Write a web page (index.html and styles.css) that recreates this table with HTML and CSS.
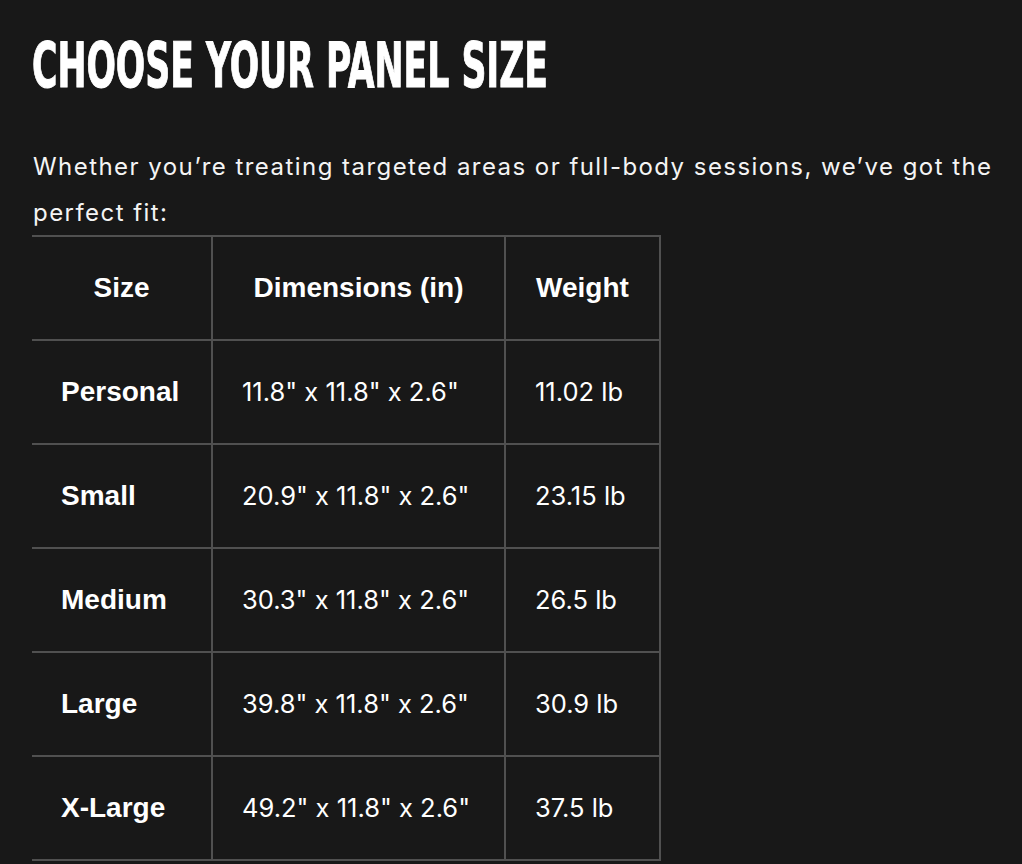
FILE: index.html
```html
<!DOCTYPE html>
<html lang="en">
<head>
<meta charset="utf-8">
<title>Choose your panel size</title>
<link rel="stylesheet" href="styles.css">
</head>
<body>
<main class="section">
  <h2 class="title">CHOOSE YOUR PANEL SIZE</h2>
  <p class="intro">Whether you’re treating targeted areas or full-body sessions, we’ve got the perfect fit:</p>
  <table class="sizes">
    <colgroup>
      <col class="c1"><col class="c2"><col class="c3">
    </colgroup>
    <thead>
      <tr><th>Size</th><th>Dimensions (in)</th><th>Weight</th></tr>
    </thead>
    <tbody>
      <tr><td class="name">Personal</td><td>11.8" x 11.8" x 2.6"</td><td>11.02 lb</td></tr>
      <tr><td class="name">Small</td><td>20.9" x 11.8" x 2.6"</td><td>23.15 lb</td></tr>
      <tr><td class="name">Medium</td><td>30.3" x 11.8" x 2.6"</td><td>26.5 lb</td></tr>
      <tr><td class="name">Large</td><td>39.8" x 11.8" x 2.6"</td><td>30.9 lb</td></tr>
      <tr><td class="name">X-Large</td><td>49.2" x 11.8" x 2.6"</td><td>37.5 lb</td></tr>
    </tbody>
  </table>
</main>
</body>
</html>
```

FILE: styles.css
```css
html, body {
  margin: 0;
  padding: 0;
  background: #181818;
  color: #ffffff;
}
body {
  font-family: Inter, "Noto Sans", sans-serif;
}
.section {
  padding: 35px 0 0 32px;
}
.title {
  margin: 0;
  font-family: "DejaVu Sans Condensed", "DejaVu Sans", sans-serif;
  font-weight: 700;
  font-size: 62px;
  line-height: 62px;
  white-space: nowrap;
  transform: scaleX(0.621);
  transform-origin: left center;
  -webkit-text-stroke: 1px #ffffff;
}
.intro {
  margin: 47px 0 0 1px;
  font-size: 24px;
  line-height: 46px;
  letter-spacing: 1.45px;
  color: #f4f4f4;
}
.sizes {
  margin-top: -1px;
  width: 629px;
  table-layout: fixed;
  border-collapse: separate;
  border-spacing: 0;
  border-top: 2px solid #505050;
}
.c1 { width: 181px; }
.c2 { width: 293px; }
.c3 { width: 155px; }
.sizes th,
.sizes td {
  padding: 33px 0 33px 29px;
  line-height: 36px;
  border-right: 2px solid #505050;
  border-bottom: 2px solid #505050;
  text-align: left;
  vertical-align: middle;
  white-space: nowrap;
}
.sizes td {
  font-family: Inter, sans-serif;
  font-size: 25.5px;
  font-weight: 400;
}
.sizes th {
  padding-left: 0;
  text-align: center;
  font-family: "Liberation Sans", Arial, sans-serif;
  font-size: 28px;
  font-weight: 700;
}
.sizes td.name {
  font-family: "Liberation Sans", Arial, sans-serif;
  font-size: 28px;
  font-weight: 700;
}
```
